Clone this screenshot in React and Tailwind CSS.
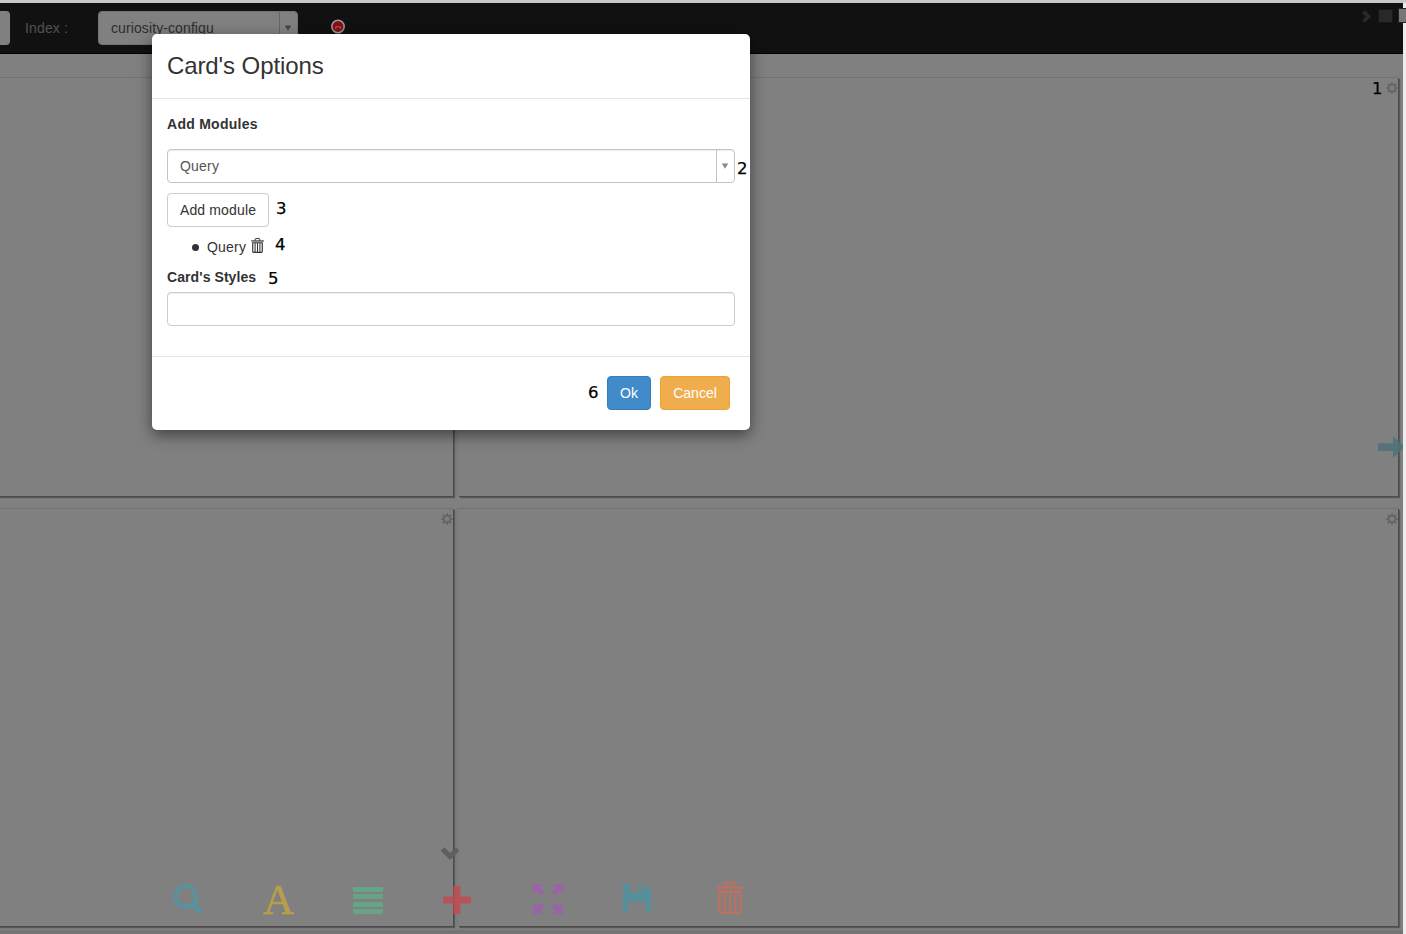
import React from "react";

function Gear() {
  return (
    <svg viewBox="0 0 12 12" className="h-3 w-3" fill="none" stroke="#666">
      <circle cx="6" cy="6" r="3.3" strokeWidth="2" />
      <path d="M6 .2v2M6 9.800v2M.2 6h2M9.800 6h2M1.800 1.800l1.500 1.500M8.700 8.700l1.500 1.500M1.800 10.200l1.500-1.500M8.700 3.300l1.500-1.500" strokeWidth="2" />
    </svg>
  );
}

function Trash({ className }) {
  return (
    <svg viewBox="0 0 28 33" className={className} fill="none" stroke="currentColor">
      <path d="M0 6.500h28" strokeWidth="2.6" />
      <path d="M8.800 6V2.600q0-1.300 1.300-1.300h7.800q1.300 0 1.300 1.300V6" strokeWidth="2.2" />
      <path d="M3.500 10.500h21v19.400q0 1.800-1.800 1.800H5.300q-1.800 0-1.800-1.800z" strokeWidth="2.600" />
      <path d="M8.700 11v20M14 11v20M19.300 11v20" strokeWidth="2.300" />
    </svg>
  );
}

function Card({ gear = true }) {
  return (
    <div className="flex justify-end border-t border-[#727272] bg-[#808080] pt-1 shadow-[1px_1px_0_#4c4c4c,2px_2px_1px_#585858,-1px_0_1px_#777]">
      {gear && <Gear />}
    </div>
  );
}

function Note({ children, className }) {
  return (
    <span className={"absolute font-['DejaVu_Sans',sans-serif] text-[16.5px] leading-5 text-black [-webkit-text-stroke:0.25px_black] " + className}>{children}</span>
  );
}

function Arrow() {
  return (
    <svg viewBox="0 0 8 6" className="mr-[1px] h-[6px] w-[8px]" fill="currentColor">
      <path d="M.8 .5h6.400L4 5.800z" />
    </svg>
  );
}

function Modal() {
  return (
    <div className="absolute left-[152px] top-[34px] h-[396px] w-[598px] rounded-[5px] bg-white text-[#333] shadow-[0_5px_15px_rgba(0,0,0,0.5)]">
      <div className="h-[65px] border-b border-[#e5e5e5] px-[15px] pt-[15px] text-[24px] leading-[34px] tracking-[-0.1px]">Card's Options</div>
      <div className="flex h-[257px] flex-col px-[15px] pt-[15px]">
        <div className="h-[35px] font-bold leading-5 tracking-[0.27px]">Add Modules</div>
        <div className="flex h-[34px] shrink-0 rounded-[4px] border border-[#c4c4c4] shadow-[inset_0_1px_1px_rgba(0,0,0,0.075)]">
          <span className="flex-1 pl-3 leading-8 tracking-[0.2px] text-[#555]">Query</span>
          <span className="flex w-[18px] items-center justify-center border-l border-[#c4c4c4] text-[#888]">
            <Arrow />
          </span>
        </div>
        <button className="mt-[10px] h-[34px] w-[102px] shrink-0 rounded-[4px] border border-[#ccc] leading-8 tracking-[0.15px]">Add module</button>
        <div className="mt-[10px] flex h-5 items-center pl-[25px] leading-5">
          <span className="h-[7px] w-[7px] rounded-full bg-[#333]" />
          <span className="ml-2 tracking-[0.2px]">Query</span>
          <Trash className="mb-[3px] ml-[5px] h-[15px] w-[13px]" />
        </div>
        <div className="mt-[10px] h-[25px] font-bold leading-5 tracking-[0.08px]">Card's Styles</div>
        <input aria-label="Card's Styles" className="h-[34px] w-full shrink-0 rounded-[4px] border border-[#ccc] shadow-[inset_0_1px_1px_rgba(0,0,0,0.075)]" />
      </div>
      <div className="flex justify-end gap-[9px] border-t border-[#e5e5e5] pr-5 pt-[19px]">
        <button className="h-[34px] w-[44px] rounded-[4px] border border-[#357ebd] bg-[#428bca] text-white">Ok</button>
        <button className="h-[34px] w-[70px] rounded-[4px] border border-[#eea236] bg-[#f0ad4e] text-white">Cancel</button>
      </div>
      <Note className="left-[585px] top-[125px]">2</Note>
      <Note className="left-[124px] top-[165px]">3</Note>
      <Note className="left-[123px] top-[201px]">4</Note>
      <Note className="left-[116px] top-[235px]">5</Note>
      <Note className="left-[436px] top-[349px]">6</Note>
    </div>
  );
}

const CORNER = "M0 0H10.300L7.200 3.100 11.500 7.800 7.800 11.500 3.100 7.200 0 10.300z";

function Toolbar() {
  return (
    <div>
      <svg viewBox="0 0 31 31" className="absolute left-[173px] top-[884px] h-[31px] w-[31px]" fill="none" stroke="#56939c">
        <circle cx="12.800" cy="12.500" r="10.300" strokeWidth="4" />
        <path d="M19.500 20l8.500 8.500" strokeWidth="5.200" />
      </svg>
      <span className="absolute left-[263px] top-[878px] font-['Liberation_Serif',serif] text-[43px] leading-[44px] text-[#b69f49] [-webkit-text-stroke:0.6px_#b69f49]">A</span>
      <div className="absolute left-[353px] top-[887px] flex w-[30px] flex-col gap-[2.4px]">
        <i className="h-[5px] rounded-[1px] bg-[#65a484]" />
        <i className="h-[5px] rounded-[1px] bg-[#65a484]" />
        <i className="h-[5px] rounded-[1px] bg-[#65a484]" />
        <i className="h-[5px] rounded-[1px] bg-[#65a484]" />
      </div>
      <svg viewBox="0 0 28 28" className="absolute left-[443px] top-[886px] h-7 w-7 opacity-85" fill="#c04c53">
        <path d="M10.300 0h7.200v10.500H28v7H17.500V28h-7.200V17.500H0v-7h10.300z" />
      </svg>
      <svg viewBox="0 0 30 30" className="absolute left-[533px] top-[884px] h-[30px] w-[30px]" fill="#9a62a7">
        <path d={CORNER} />
        <path d={CORNER} transform="translate(30 0) scale(-1 1)" />
        <path d={CORNER} transform="translate(0 30) scale(1 -1)" />
        <path d={CORNER} transform="translate(30 30) scale(-1 -1)" />
      </svg>
      <svg viewBox="0 0 28 28" className="absolute left-[623px] top-[884px] h-7 w-7" fill="#568f99">
        <path d="M1 0h6.500v7q0 1 1 1H19q1 0 1-1V0h2l6 6v21q0 1-1 1h-4V19q0-1-1-1H6q-1 0-1 1v9H1q-1 0-1-1V1q0-1 1-1z" />
        <path d="M15 0h3v5.500h-3z" />
      </svg>
      <Trash className="absolute left-[716px] top-[881px] h-[33px] w-7 text-[#b87163]" />
    </div>
  );
}

export default function App() {
  return (
    <div className="relative flex h-[934px] w-[1406px] overflow-hidden bg-[#808080] font-['Liberation_Sans',sans-serif] text-[14px]">
      <div className="flex w-[1403px] shrink-0 flex-col">
        <header className="flex h-[54px] shrink-0 border-b border-t-[3px] border-b-black border-t-[#c9c9c9] bg-[#111] pt-[8px]">
          <span className="h-[34px] w-[10px] rounded-r-[4px] bg-[#808080]" />
          <span className="w-[88px] pl-[15px] leading-[34px] tracking-[0.15px] text-[#525252]">Index :</span>
          <div className="flex h-[34px] w-[200px] rounded-[4px] border border-[#747474] bg-[#808080]">
            <span className="flex-1 pl-3 leading-8 tracking-[0.1px] text-[#2d2d2d]">curiosity-configu</span>
            <span className="flex w-[18px] items-center justify-center border-l border-[#666] text-[#444]">
              <Arrow />
            </span>
          </div>
          <svg viewBox="0 0 16 18" className="ml-8 mt-2 h-[18px] w-4">
            <path d="M5 13h6v5H5z" fill="#5a1014" />
            <circle cx="8" cy="7.500" r="6.200" fill="#831116" stroke="#999" strokeWidth="1.500" />
            <path d="M5.800 10V7.800h4.600V10" fill="none" stroke="#b06060" />
          </svg>
          <svg viewBox="0 0 10 13" className="ml-[1016px] mt-[-1px] h-[13px] w-[10px]" fill="none" stroke="#292929" strokeWidth="3.800">
            <path d="M1.500 1.500l5 5-5 5" />
          </svg>
          <span className="-mt-[2px] ml-[6px] h-[14px] w-[15px] border border-[#181818] bg-[#292929]" />
        </header>
        <div className="h-[23px] shrink-0" />
        <main className="-ml-[4px] grid w-[1402px] shrink-0 grid-cols-[457px_940px] grid-rows-[419px_418px] gap-x-[5px] gap-y-[12px]">
          <Card gear={false} />
          <Card gear />
          <Card />
          <Card />
        </main>
        <div className="mt-[4px] h-[4px] bg-[#747474]" />
      </div>
      <div className="w-[3px] border-t-[3px] border-[#c9c9c9] bg-[#ededed]" />
      <span className="absolute left-[1398px] top-[8px] h-[15px] w-2 border border-r-0 border-[#222] bg-[#777]" />
      <svg viewBox="0 0 25 22" className="absolute left-[1378px] top-[436px] h-[22px] w-[25px] opacity-85" fill="#4e7279">
        <path d="M0 7.300h15V0l12 11-12 11v-7H0z" />
      </svg>
      <svg viewBox="0 0 20 14" className="absolute left-[440px] top-[847px] h-[14px] w-5" fill="none" stroke="#5f5f5f" strokeWidth="5">
        <path d="M2.500 2l7.500 7.500L17.500 2" />
      </svg>
      <Toolbar />
      <Modal />
      <Note className="left-[1372px] top-[79px]">1</Note>
    </div>
  );
}
